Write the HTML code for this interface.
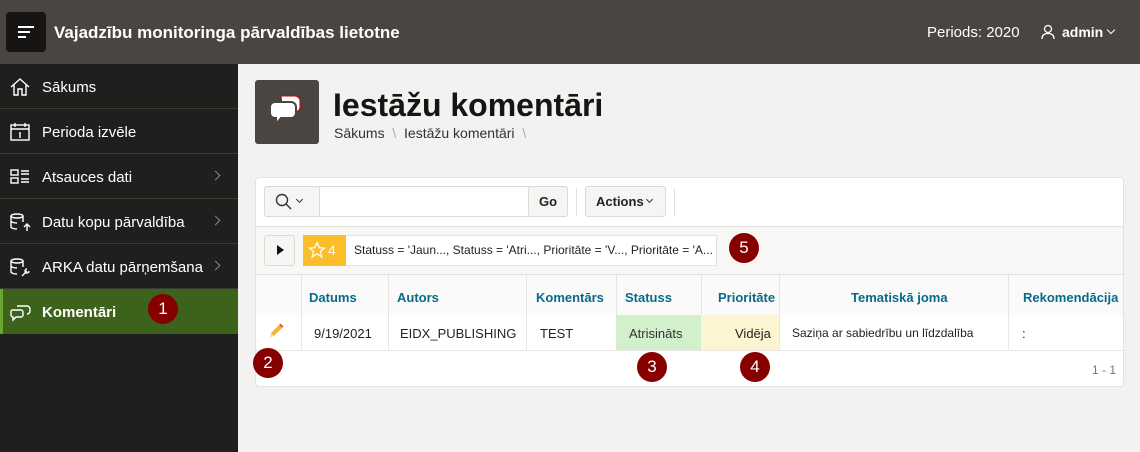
<!DOCTYPE html>
<html><head><meta charset="utf-8"><style>
*{box-sizing:border-box;margin:0;padding:0}
body{width:1140px;height:452px;overflow:hidden;font-family:"Liberation Sans","DejaVu Sans",sans-serif;background:#f3f2f0;position:relative;font-size:13px;color:#222}
.hdr{position:absolute;left:0;top:0;width:1140px;height:64px;background:#4a4541;color:#fff}
.burger{position:absolute;left:6px;top:12px;width:40px;height:40px;background:#161513;border-radius:4px}
.burger i{position:absolute;left:12px;height:2px;background:#fff}
.side{position:absolute;left:0;top:64px;width:238px;height:388px;background:#201f1d}
.mi{position:absolute;left:0;width:238px;height:45px;border-bottom:1px solid #3a3936;color:#fff;font-size:15px}
.mi span{position:absolute;left:42px;top:15px}
.mi svg{position:absolute;left:9px;top:12px}
.chev{position:absolute;left:212px;top:18px;width:7px;height:7px;border-right:1.5px solid #888;border-top:1.5px solid #888;transform:rotate(45deg)}
.badge{position:absolute;width:30px;height:30px;border-radius:50%;background:#870000;color:#fff;font-size:17px;text-align:center;line-height:30px}
.card{position:absolute;left:255px;top:177px;width:869px;height:210px;background:#fff;border:1px solid #e4e2df;border-radius:4px;overflow:hidden}
.btn{position:absolute;background:#f6f5f3;border:1px solid #dcdad6;border-radius:3px;font-weight:bold;font-size:13px;text-align:center}
.col{position:absolute;top:97px;height:75px;border-left:1px solid #e8e6e3}
.h{position:absolute;top:112px;color:#076b8c;font-weight:bold;font-size:13px}
.d{position:absolute;top:148px;font-size:13px}
</style></head><body>
<div class="hdr">
<div class="burger"><i style="top:14px;width:16px"></i><i style="top:19px;width:12px"></i><i style="top:24px;width:8px"></i></div>
<div style="position:absolute;left:54px;top:23px;font-size:17px;font-weight:bold">Vajadzību monitoringa pārvaldības lietotne</div>
<div style="position:absolute;left:927px;top:24px;font-size:15px">Periods: 2020</div>
<svg style="position:absolute;left:1040px;top:24px" width="16" height="16" viewBox="0 0 16 16" fill="none" stroke="#fff" stroke-width="1.3"><circle cx="8" cy="5" r="3.5"/><path d="M2 15c0-4 2.5-5.5 6-5.5s6 1.5 6 5.5"/></svg>
<div style="position:absolute;left:1062px;top:24px;font-size:14px;font-weight:bold">admin</div>
<div style="position:absolute;left:1108px;top:27px;width:6px;height:6px;border-right:1.3px solid #fff;border-bottom:1.3px solid #fff;transform:rotate(45deg)"></div>
</div>
<div class="side">
<div class="mi" style="top:0"><svg width="22" height="22" viewBox="0 0 22 22" fill="none" stroke="#fff" stroke-width="1.4"><path d="M2 11L11 3l9 8M5 9v10h4v-6h4v6h4V9"/></svg><span>Sākums</span></div>
<div class="mi" style="top:45px"><svg width="22" height="22" viewBox="0 0 22 22" fill="none" stroke="#fff" stroke-width="1.4"><rect x="2" y="4" width="18" height="15"/><path d="M2 8h18M6 2v4M16 2v4M10 12h1v5"/></svg><span>Perioda izvēle</span></div>
<div class="mi" style="top:90px"><svg width="22" height="22" viewBox="0 0 22 22" fill="none" stroke="#fff" stroke-width="1.4"><rect x="2" y="4" width="7" height="5"/><rect x="2" y="12" width="7" height="5"/><path d="M12 5h8M12 8h8M12 13h8M12 16h8"/></svg><span>Atsauces dati</span><i class="chev"></i></div>
<div class="mi" style="top:135px"><svg width="22" height="22" viewBox="0 0 22 22" fill="none" stroke="#fff" stroke-width="1.4"><ellipse cx="8" cy="5" rx="6" ry="2"/><path d="M2 5v11c0 1 3 2 6 2M14 5v6M2 10c0 1 3 2 6 2M18 20v-7M15 16l3-3 3 3"/></svg><span>Datu kopu pārvaldība</span><i class="chev"></i></div>
<div class="mi" style="top:180px"><svg width="22" height="22" viewBox="0 0 22 22" fill="none" stroke="#fff" stroke-width="1.4"><ellipse cx="8" cy="5" rx="6" ry="2"/><path d="M2 5v11c0 1 3 2 6 2M14 5v6M2 10c0 1 3 2 6 2M13 20l5-5M18 13a2 2 0 1 0 2 2"/></svg><span>ARKA datu pārņemšana</span><i class="chev"></i></div>
<div class="mi" style="top:225px;background:#3d621c;border-left:3px solid #6aa72f;border-bottom:none"><svg width="22" height="22" viewBox="0 0 22 22" fill="none" stroke="#fff" stroke-width="1.4" style="left:6px"><path d="M8 5h10a3 3 0 0 1 3 3v2a3 3 0 0 1-3 3M3 9h9a2 2 0 0 1 2 2v3a2 2 0 0 1-2 2H7l-3 3v-3a2 2 0 0 1-2-2v-3a2 2 0 0 1 1-2"/></svg><span style="left:39px;font-weight:bold">Komentāri</span></div>
</div>
<div class="badge" style="left:148px;top:294px">1</div>
<div style="position:absolute;left:255px;top:80px;width:64px;height:64px;background:#4a4541;border-radius:3px">
<svg width="64" height="64" viewBox="0 0 64 64"><path d="M26 16h14a5 5 0 0 1 5 5v6a5 5 0 0 1-5 5H28z" fill="#fff" stroke="#c00" stroke-width="1"/><path d="M20 22h16a5 5 0 0 1 5 5v6a5 5 0 0 1-5 5H26l-5 6v-6h-1a5 5 0 0 1-5-5v-6a5 5 0 0 1 5-5z" fill="#fff" stroke="#4a4541" stroke-width="2"/></svg></div>
<div style="position:absolute;left:333px;top:87px;font-size:32px;font-weight:bold;color:#161513">Iestāžu komentāri</div>
<div style="position:absolute;left:334px;top:125px;font-size:14px;color:#333">Sākums <span style="color:#aaa">&nbsp;\&nbsp;</span> Iestāžu komentāri <span style="color:#aaa">&nbsp;\</span></div>
<div class="card">
<div class="btn" style="left:8px;top:8px;width:304px;height:31px;background:#fff"></div>
<div class="btn" style="left:8px;top:8px;width:56px;height:31px;border-radius:3px 0 0 3px"></div>
<svg style="position:absolute;left:19px;top:15px" width="18" height="18" viewBox="0 0 18 18" fill="none" stroke="#333" stroke-width="1.4"><circle cx="7" cy="7" r="5.5"/><path d="M11 11l5 5"/></svg>
<div style="position:absolute;left:41px;top:19px;width:5px;height:5px;border-right:1.2px solid #333;border-bottom:1.2px solid #333;transform:rotate(45deg)"></div>
<div class="btn" style="left:272px;top:8px;width:40px;height:31px;line-height:29px">Go</div>
<div style="position:absolute;left:320px;top:10px;width:1px;height:28px;background:#e4e2df"></div>
<div class="btn" style="left:329px;top:8px;width:81px;height:31px;line-height:29px;text-align:left;padding-left:10px">Actions</div>
<div style="position:absolute;left:391px;top:19px;width:5px;height:5px;border-right:1.2px solid #333;border-bottom:1.2px solid #333;transform:rotate(45deg)"></div>
<div style="position:absolute;left:418px;top:10px;width:1px;height:28px;background:#e4e2df"></div>
<div style="position:absolute;left:0;top:48px;width:869px;height:49px;background:#f8f7f6;border-top:1px solid #e4e2df;border-bottom:1px solid #e4e2df"></div>
<div class="btn" style="left:8px;top:57px;width:31px;height:31px"></div>
<div style="position:absolute;left:21px;top:67px;border-left:7px solid #111;border-top:5px solid transparent;border-bottom:5px solid transparent"></div>
<div style="position:absolute;left:47px;top:57px;width:414px;height:31px;background:#fff;border:1px solid #e4e2df;border-radius:2px"></div>
<div style="position:absolute;left:47px;top:57px;width:43px;height:31px;background:#fbbe2a;color:#fff;font-size:14px;line-height:31px;padding-left:25px">4</div>
<svg style="position:absolute;left:52px;top:63px" width="18" height="18" viewBox="0 0 24 24" fill="none" stroke="#fff" stroke-width="1.6"><path d="M12 2l3 7 7 .5-5.5 4.5 2 7.5L12 17l-6.5 4.5 2-7.5L2 9.5 9 9z"/></svg>
<div style="position:absolute;left:98px;top:65px;font-size:12px">Statuss = 'Jaun..., Statuss = 'Atri..., Prioritāte = 'V..., Prioritāte = 'A...</div>
<div style="position:absolute;left:0;top:97px;width:869px;height:40px;background:#fafafa"></div>
<div class="col" style="left:45px"></div><div class="col" style="left:132px"></div><div class="col" style="left:270px"></div><div class="col" style="left:360px"></div><div class="col" style="left:445px"></div><div class="col" style="left:523px"></div><div class="col" style="left:752px"></div>
<div style="position:absolute;left:360px;top:137px;width:85px;height:35px;background:#d3f0cc"></div>
<div style="position:absolute;left:445px;top:137px;width:78px;height:35px;background:#fdf4d2"></div>
<div style="position:absolute;left:0;top:172px;width:869px;height:1px;background:#e8e6e3"></div>
<div class="h" style="left:53px">Datums</div><div class="h" style="left:141px">Autors</div><div class="h" style="left:280px">Komentārs</div><div class="h" style="left:369px">Statuss</div><div class="h" style="left:462px">Prioritāte</div><div class="h" style="left:595px">Tematiskā joma</div><div class="h" style="left:767px">Rekomendācija</div>
<svg style="position:absolute;left:11px;top:144px" width="18" height="18" viewBox="0 0 18 18"><path d="M3 15l1-4 8-8 3 3-8 8z" fill="#f5b731"/><path d="M12 3l1.5-1.5 3 3L15 6z" fill="#e35b4f"/><path d="M3 15l1-4 3 3z" fill="#f2d9a8"/></svg>
<div class="d" style="left:58px">9/19/2021</div><div class="d" style="left:144px">EIDX_PUBLISHING</div><div class="d" style="left:284px">TEST</div><div class="d" style="left:373px;color:#333">Atrisināts</div><div class="d" style="left:479px">Vidēja</div><div class="d" style="left:536px;font-size:12px">Saziņa ar sabiedrību un līdzdalība</div><div class="d" style="left:766px">:</div>
<div style="position:absolute;left:836px;top:185px;color:#777;font-size:12px">1 - 1</div>
</div>
<div class="badge" style="left:253px;top:348px">2</div>
<div class="badge" style="left:637px;top:352px">3</div>
<div class="badge" style="left:740px;top:352px">4</div>
<div class="badge" style="left:729px;top:233px">5</div>
</body></html>
